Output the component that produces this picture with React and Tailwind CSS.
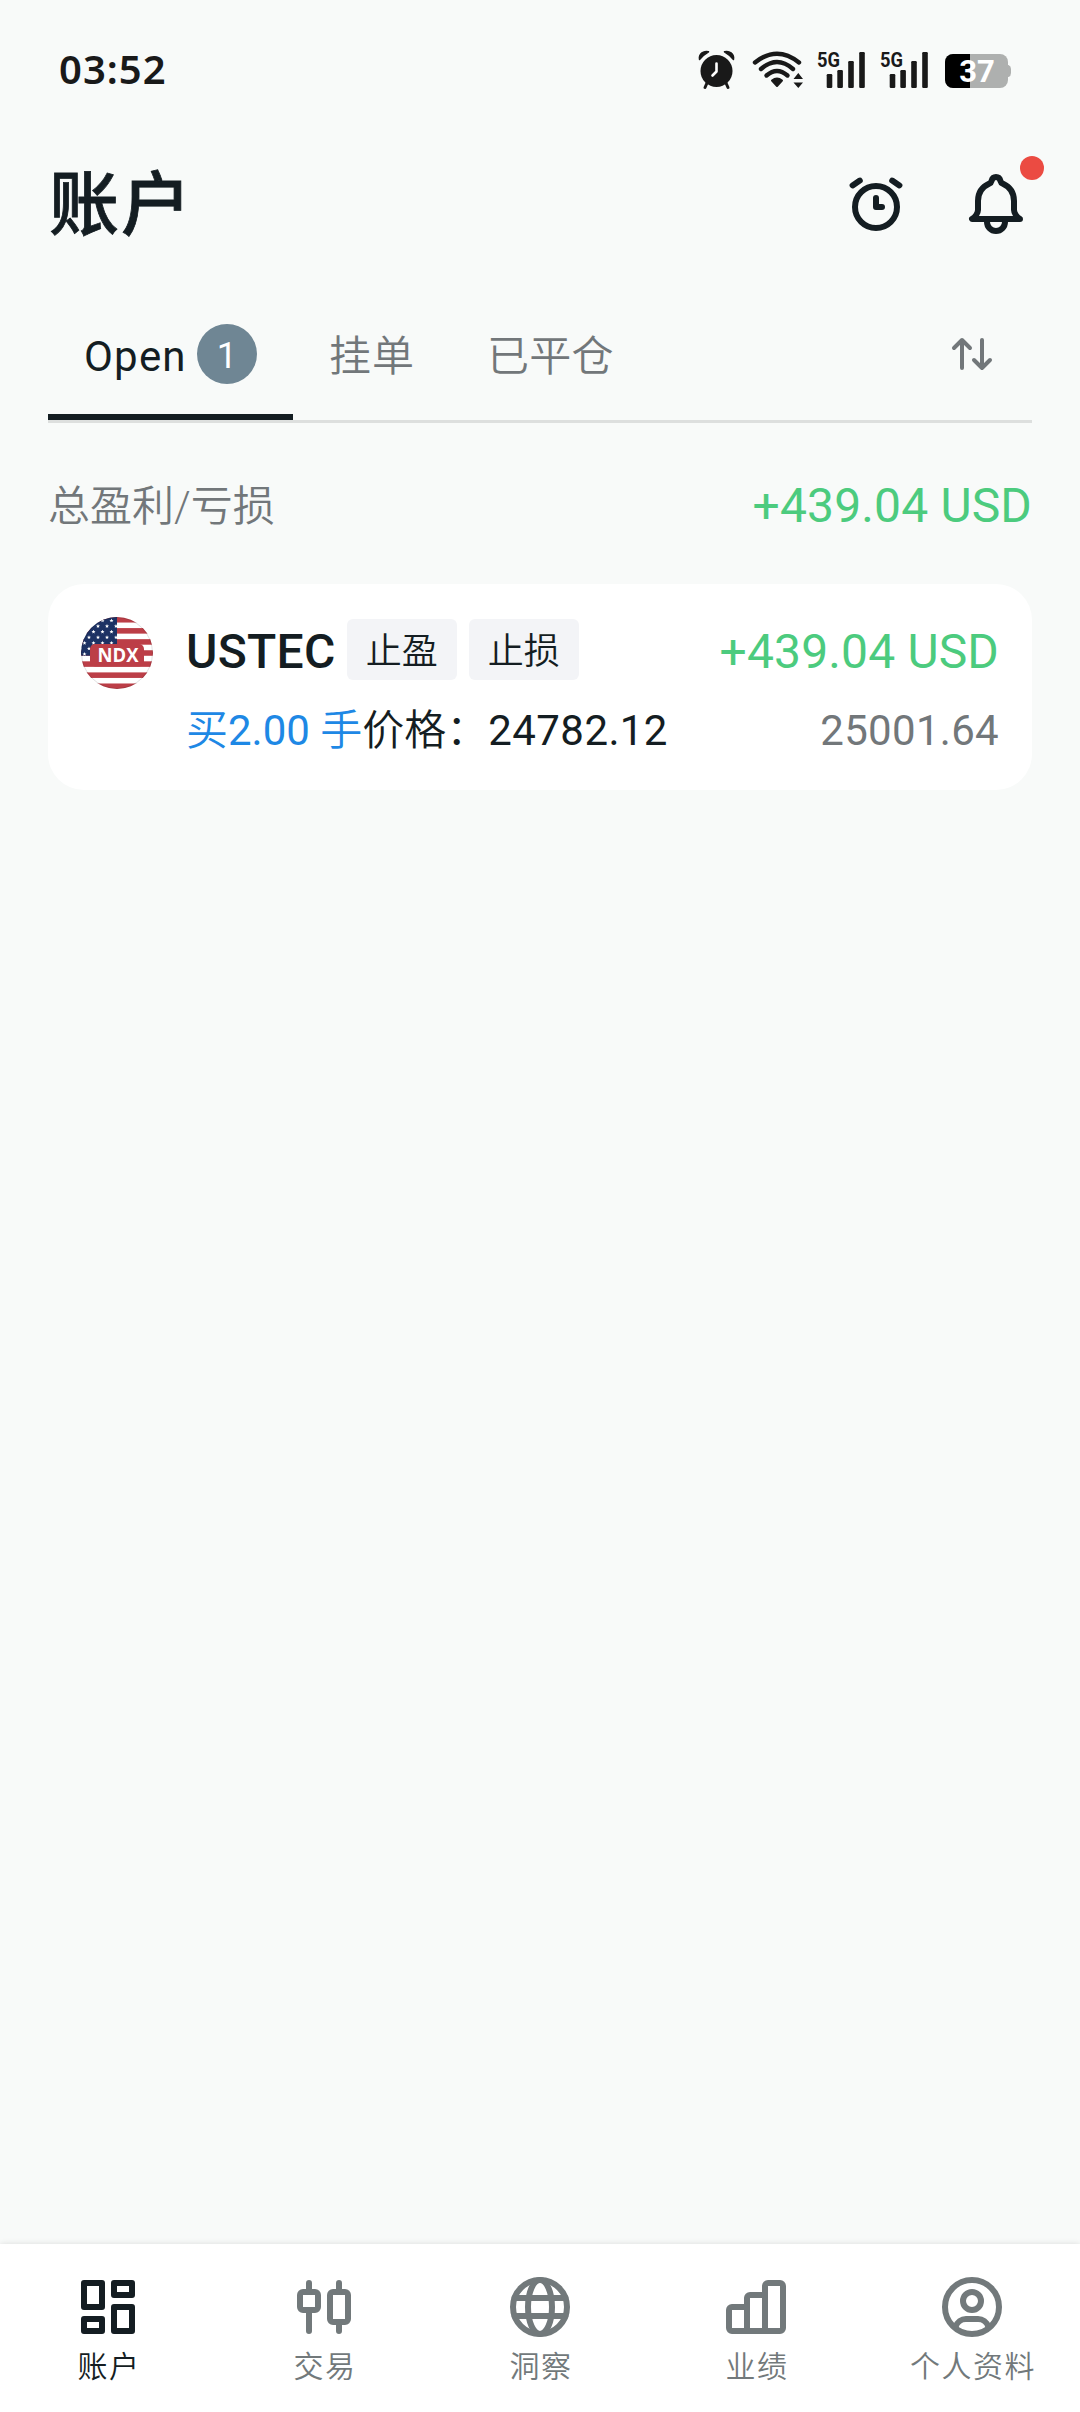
const stripes = [0, 1, 2, 3, 4, 5, 6];
const stars = [];
for (let r = 0; r < 7; r++) {
  for (let c = 0; c < 5; c++) {
    stars.push([r % 2 ? c * 9 - 1 : c * 9 + 3.5, 3.5 + r * 5.6]);
  }
}

function StatusAlarm() {
  return (
    <svg className="h-[38px] w-[38px] shrink-0 overflow-visible" viewBox="0 0 38 38" fill="none">
      <circle cx="18.5" cy="21" r="16" fill="#191919" />
      <path d="M1.500 9.500C0.500 3.500 6 0.500 10.500 1.800Q5 5 1.500 9.500ZM35.500 9.500C36.500 3.500 31 0.500 26.500 1.800Q32 5 35.500 9.500Z" fill="#191919" stroke="#191919" strokeWidth="1.500" strokeLinejoin="round" />
      <path d="M9 33L7 37.500M28 33L30 37.500" stroke="#191919" strokeWidth="3" strokeLinecap="round" />
      <path d="M18.500 13.500V21.500L14.500 25.500" stroke="#fff" strokeWidth="2.600" strokeLinecap="round" strokeLinejoin="round" />
    </svg>
  );
}

function StatusWifi() {
  return (
    <svg className="h-[38px] w-[52px] shrink-0 overflow-visible" viewBox="0 0 52 38" fill="none">
      <g stroke="#191919" strokeWidth="4.400" strokeLinecap="round">
        <path d="M3 12.500Q25 -5 47 12.500" />
        <path d="M9 19Q25 5 41 19" />
        <path d="M14.500 25.500Q25 16.500 35.500 25.500" />
      </g>
      <path d="M20 30.500Q25 26.500 30 30.500L25 36Z" fill="#191919" stroke="#191919" strokeWidth="2" strokeLinejoin="round" />
      <path d="M41.500 29L46.300 23L51 29ZM41.500 32.500H51L46.300 38Z" fill="#191919" />
    </svg>
  );
}

function Signal() {
  return (
    <svg className="h-[38px] w-[50px] shrink-0 overflow-visible" viewBox="0 0 50 38">
      <text x="0" y="16.800" textLength="23" lengthAdjust="spacingAndGlyphs" className="font-['Roboto',sans-serif] text-[21px] font-bold" fill="#191919">5G</text>
      <g fill="#191919">
        <rect x="9.700" y="24" width="5.600" height="14" rx="1.200" />
        <rect x="20.300" y="20" width="5.600" height="18" rx="1.200" />
        <rect x="31.200" y="11" width="5.600" height="27" rx="1.200" />
        <rect x="42.200" y="2" width="5.600" height="36" rx="1.200" />
      </g>
    </svg>
  );
}

function Battery() {
  return (
    <svg className="mt-[3px] h-[34px] w-[67px] shrink-0 overflow-visible" viewBox="0 0 67 34">
      <rect width="63" height="34" rx="8" fill="#aeb0af" />
      <path d="M62 11H63.500Q66 12 66 15V19Q66 22 63.500 23H62Z" fill="#aeb0af" />
      <path d="M8 0H25V34H8A8 8 0 0 1 0 26V8A8 8 0 0 1 8 0Z" fill="#000" />
      <text x="32" y="28" textAnchor="middle" className="font-['Roboto',sans-serif] text-[31px] font-bold" fill="#fff">37</text>
    </svg>
  );
}

function Icon({ children }) {
  return (
    <svg className="h-[72px] w-[72px] shrink-0" viewBox="0 0 24 24" fill="none" stroke="currentColor" strokeWidth="2" strokeLinecap="round" strokeLinejoin="round">
      {children}
    </svg>
  );
}

function Flag() {
  return (
    <svg className="h-[72px] w-[72px] shrink-0" viewBox="0 0 72 72">
      <defs>
        <clipPath id="disc"><circle cx="36" cy="36" r="36" /></clipPath>
        <clipPath id="canton"><rect width="36" height="38.700" /></clipPath>
      </defs>
      <g clipPath="url(#disc)">
        <rect width="72" height="72" fill="#fff" />
        {stripes.map((i) => (
          <rect key={i} y={i * 11.08} width="72" height="5.540" fill="#bc3e47" />
        ))}
        <rect width="36" height="38.700" fill="#1d3264" />
        <g clipPath="url(#canton)">
          {stars.map(([x, y], i) => (
            <path key={i} transform={`translate(${x} ${y})`} fill="#fff" d="M0-2L.6-.6 2-.5.9.4 1.200 1.800 0 1-1.200 1.800-.9.400-2-.5-.6-.6Z" />
          ))}
        </g>
        <rect x="9" y="27" width="54" height="22.500" rx="5" fill="#bc3e47" />
        <text x="37" y="45" textAnchor="middle" textLength="41" lengthAdjust="spacingAndGlyphs" className="font-['Open_Sans',sans-serif] text-[19px] font-bold" fill="#fff">NDX</text>
      </g>
      <circle cx="36" cy="36" r="35.500" fill="none" stroke="#000" strokeOpacity="0.12" />
    </svg>
  );
}

const nav = [
  {
    label: "账户", active: true,
    icon: <><rect x="4" y="4" width="6" height="8" /><rect x="14" y="4" width="6" height="4" /><rect x="4" y="16" width="6" height="4" /><rect x="14" y="12" width="6" height="8" /></>,
  },
  {
    label: "交易",
    icon: <><rect x="4" y="7" width="6" height="6" rx="1" /><path d="M7 4v3M7 13v7" /><rect x="14" y="7" width="6" height="10" rx="1" /><path d="M17 4v3M17 17v3" /></>,
  },
  {
    label: "洞察",
    icon: <><circle cx="12" cy="12" r="9" /><ellipse cx="12" cy="12" rx="4" ry="9" /><path d="M3.500 9h17M3.500 15h17" /></>,
  },
  {
    label: "业绩",
    icon: <path d="M9 20H4a1 1 0 0 1-1-1V13a1 1 0 0 1 1-1H9M15 20H9V9a1 1 0 0 1 1-1H15M15 20V5a1 1 0 0 1 1-1h4a1 1 0 0 1 1 1V19a1 1 0 0 1-1 1Z" />,
  },
  {
    label: "个人资料",
    icon: <><circle cx="12" cy="12" r="9" /><circle cx="12" cy="10" r="3" /><path d="M6.500 18.700C7 17 8.500 16 10 16H14C15.500 16 17 17 17.500 18.700" /></>,
  },
];

export default function App() {
  return (
    <div className="flex h-[2412px] w-[1080px] flex-col overflow-hidden bg-[#f8faf9] font-['Roboto','Noto_Sans_CJK_SC',sans-serif] text-[#141d22]">
      <header className="flex h-[138px] shrink-0 items-center pl-[59px] pr-[68px]">
        <span className="font-['Noto_Sans',sans-serif] text-[40px] font-semibold leading-none tracking-[1px] text-[#191919]">03:52</span>
        <div className="ml-auto flex items-center">
          <StatusAlarm />
          <div className="ml-[16px]"><StatusWifi /></div>
          <div className="ml-[13px]"><Signal /></div>
          <div className="ml-[13px]"><Signal /></div>
          <div className="ml-[15px]"><Battery /></div>
        </div>
      </header>

      <div className="flex h-[132px] shrink-0 items-center px-12">
        <h1 className="pl-px pt-[3px] text-[70px] font-medium leading-none tracking-[2px] [-webkit-text-stroke:0.8px_#141d22]">账户</h1>
        <div className="ml-auto flex gap-12">
          <Icon>
            <circle cx="12" cy="13" r="7" />
            <path d="M12 10v3h2M4.200 5.800L6.600 4.200M19.800 5.800L17.400 4.200" />
          </Icon>
          <div className="relative">
            <Icon>
              <path d="M4 17H20C19 16.500 18 15 18 14V11C18 8.300 16.600 6.300 14.200 5.200C13.800 5 13.600 4.700 13.500 4.300C13.300 3.500 12.800 3 12 3C11.200 3 10.700 3.500 10.500 4.300C10.400 4.700 10.200 5 9.800 5.200C7.400 6.300 6 8.300 6 11V14C6 15 5 16.500 4 17Z" />
              <path d="M9 18a3 3 0 0 0 6 0" />
            </Icon>
            <span className="absolute -right-3 -top-3 h-6 w-6 rounded-full bg-[#eb4b42]" />
          </div>
        </div>
      </div>

      <nav className="mx-12 mt-[18px] flex h-[135px] shrink-0 border-b-[3px] border-[#dddfde] text-[42px] leading-none tracking-[1px]">
        <div className="flex w-[245px] items-center border-b-[6px] border-[#141d22] pl-9 pt-[6px]">
          <span className="pt-1.5 tracking-[1.200px]">Open</span>
          <span className="ml-[10px] flex h-[60px] w-[60px] items-center justify-center rounded-full bg-[#6f8694] pt-[4px] text-[36px] tracking-normal text-white">1</span>
        </div>
        <div className="flex items-center pl-9 pt-[6px] font-[350] text-[#72777a]">挂单</div>
        <div className="flex items-center pl-[72px] pt-[6px] font-[350] tracking-[0.200px] text-[#72777a]">已平仓</div>
        <svg className="ml-auto mr-9 h-12 w-12 self-center" viewBox="0 0 48 48" fill="none" stroke="#72777a" strokeWidth="4" strokeLinecap="round" strokeLinejoin="round">
          <path d="M14 38V10M6 18L14 10L22 18M34 10V38M26 30L34 38L42 30" />
        </svg>
      </nav>

      <div className="flex h-[161px] shrink-0 items-center justify-between px-12 pt-[4px]">
        <span className="pt-0.5 text-[42px] font-[350] leading-none text-[#72777a]">总盈利/亏损</span>
        <span className="text-[48px] leading-none tracking-[0.150px] text-[#4ccb7e]">+439.04 USD</span>
      </div>

      <section className="mx-12 flex h-[206px] shrink-0 rounded-[36px] bg-white px-[33px] pt-[33px]">
        <Flag />
        <div className="ml-[33px] flex flex-1 flex-col">
          <div className="flex h-[65px] items-center">
            <span className="pt-[4px] text-[48px] font-medium leading-none tracking-[0.300px]">USTEC</span>
            <span className="ml-[11px] flex h-[61px] w-[110px] items-center justify-center rounded-md bg-[#f3f4f7] pt-[5px] text-[36px] font-[350] leading-none">止盈</span>
            <span className="ml-3 flex h-[61px] w-[110px] items-center justify-center rounded-md bg-[#f3f4f7] pt-[5px] text-[36px] font-[350] leading-none">止损</span>
            <span className="ml-auto pt-[4px] text-[48px] leading-none tracking-[0.150px] text-[#4ccb7e]">+439.04 USD</span>
          </div>
          <div className="mt-[16px] flex h-[66px] items-center text-[42px] leading-none">
            <span className="whitespace-pre text-[#1e88e5]"><span className="font-[350]">买</span>2.00 <span className="font-[350]">手</span></span>
            <span className="font-[350]">价格：</span>
            <span className="tracking-[0.400px]">24782.12</span>
            <span className="ml-auto tracking-[0.300px] text-[#72777a]">25001.64</span>
          </div>
        </div>
      </section>

      <footer className="mt-auto grid h-[168px] shrink-0 grid-cols-5 bg-white pt-[27px] shadow-[0_0_6px_rgba(0,0,0,0.12)]">
        {nav.map((n) => (
          <div key={n.label} className={n.active ? "flex flex-col items-center text-[#141d22]" : "flex flex-col items-center text-[#72797b]"}>
            <Icon>{n.icon}</Icon>
            <span className="mt-[8px] pl-[2px] text-[30px] font-[350] leading-[32px] tracking-[1.500px]">{n.label}</span>
          </div>
        ))}
      </footer>
    </div>
  );
}
